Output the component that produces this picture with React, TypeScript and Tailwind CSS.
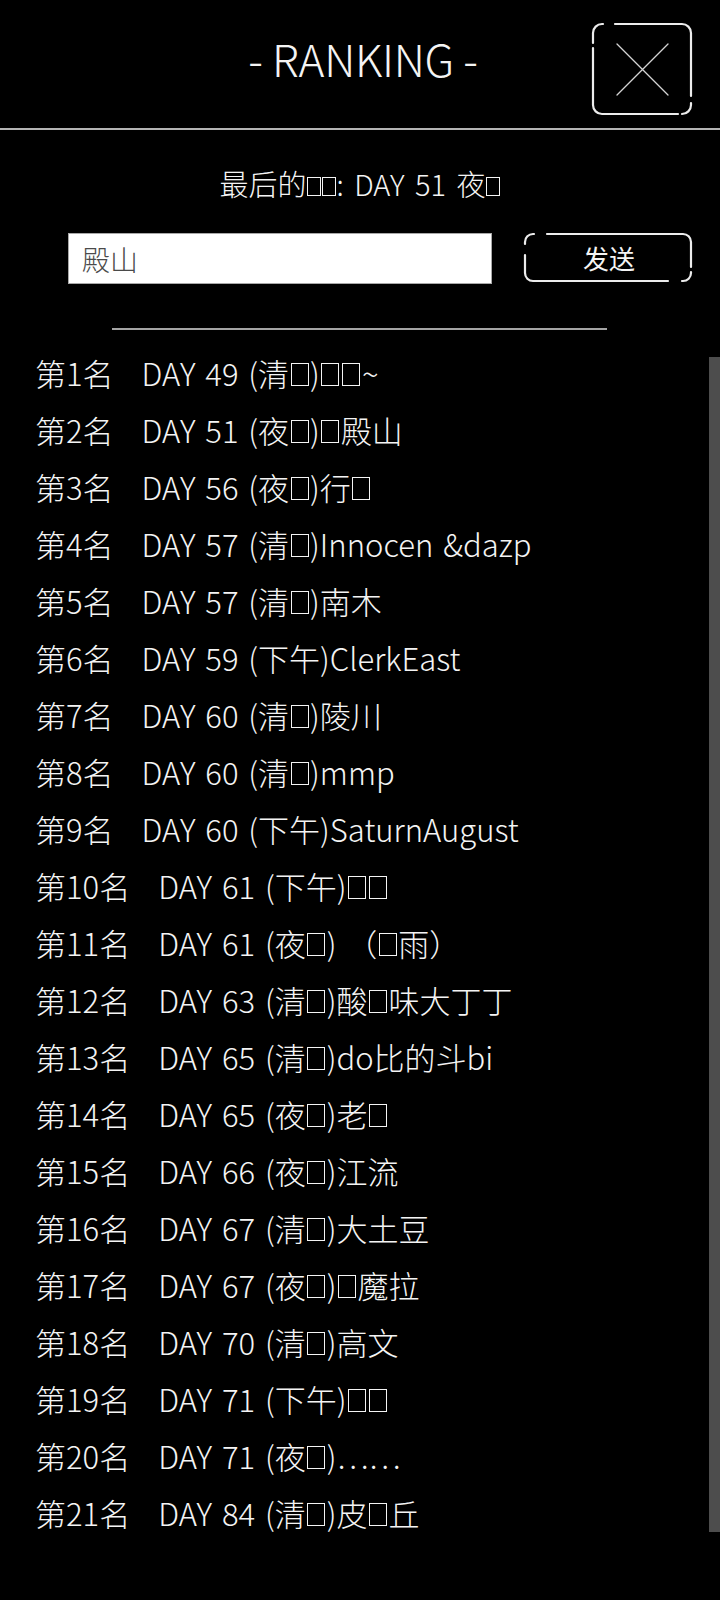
import React from "react";

const rows: [string, string][] = [
  ["第1名", "DAY 49 (清□)□□~"],
  ["第2名", "DAY 51 (夜□)□殿山"],
  ["第3名", "DAY 56 (夜□)行□"],
  ["第4名", "DAY 57 (清□)Innocen &dazp"],
  ["第5名", "DAY 57 (清□)南木"],
  ["第6名", "DAY 59 (下午)ClerkEast"],
  ["第7名", "DAY 60 (清□)陵川"],
  ["第8名", "DAY 60 (清□)mmp"],
  ["第9名", "DAY 60 (下午)SaturnAugust"],
  ["第10名", "DAY 61 (下午)□□"],
  ["第11名", "DAY 61 (夜□) （□雨）"],
  ["第12名", "DAY 63 (清□)酸□味大丁丁"],
  ["第13名", "DAY 65 (清□)do比的斗bi"],
  ["第14名", "DAY 65 (夜□)老□"],
  ["第15名", "DAY 66 (夜□)江流"],
  ["第16名", "DAY 67 (清□)大土豆"],
  ["第17名", "DAY 67 (夜□)□魔拉"],
  ["第18名", "DAY 70 (清□)高文"],
  ["第19名", "DAY 71 (下午)□□"],
  ["第20名", "DAY 71 (夜□)……"],
  ["第21名", "DAY 84 (清□)皮□丘"],
];

function Tofu({ big }: { big?: boolean }) {
  return big ? (
    <span className="inline-block w-[18px] h-[23px] border-[1.6px] border-[#f4f4f4] mx-[1.5px]" />
  ) : (
    <span className="inline-block w-[14px] h-[19px] border-[1.5px] border-[#f4f4f4] mx-[0.5px]" />
  );
}

function Txt({ s, big }: { s: string; big?: boolean }) {
  const parts = s.split("□");
  return (
    <>
      {parts.map((p, i) => (
        <React.Fragment key={i}>
          {p}
          {i < parts.length - 1 && <Tofu big={big} />}
        </React.Fragment>
      ))}
    </>
  );
}

function CloseIcon() {
  return (
    <svg width="104" height="96" viewBox="0 0 104 96" fill="none" stroke="#ececec" strokeWidth="2.2" strokeLinecap="round">
      <path d="M3 22 L3 12 A9 9 0 0 1 12 3 L13 3" />
      <path d="M25 3 L92 3 A9 9 0 0 1 101 12 L101 75" />
      <path d="M3 27 L3 84 A9 9 0 0 0 12 93 L88 93" />
      <path d="M92 93 A9 9 0 0 0 101 84 L101 82" />
      <path d="M27 23 L78 74 M78 23 L27 74" stroke="#d4d4d4" strokeWidth="1.3" />
    </svg>
  );
}

function SendFrame() {
  return (
    <svg width="172" height="53" viewBox="0 0 172 53" fill="none" stroke="#ececec" strokeWidth="2.2" strokeLinecap="round" className="absolute left-0 top-0">
      <path d="M3 13 L3 11 A8 8 0 0 1 11 3 L12 3" />
      <path d="M25 3 L161 3 A8 8 0 0 1 169 11 L169 36" />
      <path d="M3 24 L3 42 A8 8 0 0 0 11 50 L146 50" />
      <path d="M160 50 L161 50 A8 8 0 0 0 169 42 L169 41" />
    </svg>
  );
}

export default function App() {
  return (
    <div className="w-[720px] h-[1600px] bg-black text-[#f4f4f4] font-['Noto_Sans_CJK_SC','Noto_Sans',sans-serif] font-light overflow-hidden">
      <header className="h-[128px] box-content border-b-2 border-[#b4b4b4] grid grid-cols-[1fr_auto_1fr]">
        <div />
        <h1 className="pt-[36px] pl-[6px] text-[44px] leading-[44px] tracking-[-0.3px] whitespace-pre font-light">- RANKING -</h1>
        <div className="flex justify-end pr-[26px] pt-[21px]">
          <CloseIcon />
        </div>
      </header>

      <p className="mt-[33px] text-center text-[29px] leading-[40px] [word-spacing:4px]">
        <Txt s="最后的□□: DAY 51 夜□" />
      </p>

      <div className="mt-[30px] flex items-start pl-[68px]">
        <input
          readOnly
          value="殿山"
          className="w-[424px] h-[51px] bg-white border border-[#a8a8a8] pl-[13px] text-[28px] text-[#4a4a4a] outline-none font-['Noto_Sans_CJK_SC',sans-serif] font-light"
        />
        <div className="relative ml-[30px] w-[172px] h-[53px] -mt-[2px] flex items-center justify-center">
          <SendFrame />
          <span className="text-[26px] leading-none font-normal pl-[2px]">发送</span>
        </div>
      </div>

      <div className="mt-[44px] ml-[112px] w-[495px] h-[2px] bg-[#a4a4a4]" />

      <div className="mt-[14px] flex items-start">
        <ul className="flex-1 pl-[35px]">
          {rows.map(([rank, rest]) => (
            <li key={rank} className="text-[31px] leading-[57px] whitespace-pre [word-spacing:3px]">
              {rank}
              <span className="inline-block w-[28px]" />
              <Txt s={rest} big />
            </li>
          ))}
        </ul>
        <div className="mt-[13px] w-[11px] h-[1175px] bg-[#4d4d4d]" />
      </div>
    </div>
  );
}
